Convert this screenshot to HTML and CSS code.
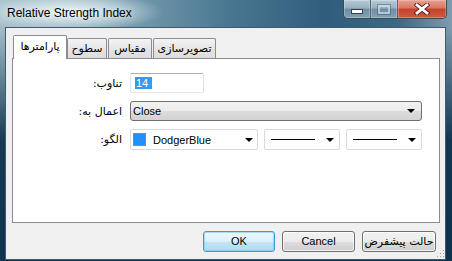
FILE: index.html
```html
<!DOCTYPE html>
<html lang="fa">
<head>
<meta charset="utf-8">
<title>Relative Strength Index</title>
<link rel="stylesheet" href="styles.css">
</head>
<body>
<div class="window">
  <div class="titlebar">
    <span class="title">Relative Strength Index</span>
    <div class="caps">
      <div class="cap min"><span class="min-glyph"></span></div>
      <div class="cap max"><span class="max-glyph"></span></div>
      <div class="cap close">
        <svg width="16" height="12" viewBox="0 0 16 12">
          <path d="M3 2 L13 10 M13 2 L3 10" stroke="#5a2018" stroke-width="4.6" stroke-linecap="square" fill="none"/>
          <path d="M3 2 L13 10 M13 2 L3 10" stroke="#ffffff" stroke-width="2.8" stroke-linecap="square" fill="none"/>
        </svg>
      </div>
    </div>
  </div>
  <div class="client">
    <div class="tabs">
      <div class="tab active" dir="rtl">پارامترها</div>
      <div class="tab t2" dir="rtl">سطوح</div>
      <div class="tab t3" dir="rtl">مقیاس</div>
      <div class="tab t4" dir="rtl">تصویرسازی</div>
    </div>
    <div class="panel">
      <div class="form">
        <div class="label" dir="rtl">تناوب:</div>
        <div class="ctrl"><div class="textbox"><span class="sel">14</span></div></div>
        <div class="label" dir="rtl">اعمال به:</div>
        <div class="ctrl"><div class="dropdown"><span class="dd-text">Close</span><i class="arrow"></i></div></div>
        <div class="label" dir="rtl">الگو:</div>
        <div class="ctrl combos">
          <div class="combo c1"><span class="swatch"></span><span class="c-text">DodgerBlue</span><i class="arrow"></i></div>
          <div class="combo c2"><span class="line"></span><i class="arrow"></i></div>
          <div class="combo c3"><span class="line"></span><i class="arrow"></i></div>
        </div>
      </div>
    </div>
    <div class="buttons">
      <div class="btn default b-ok">OK</div>
      <div class="btn b-cancel">Cancel</div>
      <div class="btn b-reset" dir="rtl">حالت پیشفرض</div>
    </div>
  </div>
  <svg class="grip" width="8" height="8" viewBox="0 0 8 8">
    <rect x="6" y="0" width="1" height="1" fill="#a0a0a0"/>
    <rect x="3" y="3" width="1" height="1" fill="#a0a0a0"/>
    <rect x="6" y="3" width="1" height="1" fill="#a0a0a0"/>
    <rect x="0" y="6" width="1" height="1" fill="#a0a0a0"/>
    <rect x="3" y="6" width="1" height="1" fill="#a0a0a0"/>
    <rect x="6" y="6" width="1" height="1" fill="#a0a0a0"/>
  </svg>
</div>
</body>
</html>
```
FILE: styles.css
```css
html, body {
  margin: 0;
  padding: 0;
  background: #0d3a58;
}

.window {
  position: relative;
  width: 452px;
  height: 261px;
  box-sizing: border-box;
  padding: 0 6px 1px 5px;
  display: flex;
  flex-direction: column;
  overflow: hidden;
  font-family: "Liberation Sans", "DejaVu Sans", sans-serif;
  font-size: 11px;
  color: #000;
  background:
    radial-gradient(ellipse 95px 20px at 68px 12px, rgba(242,248,250,0.95) 0%, rgba(220,234,240,0.6) 55%, rgba(220,234,240,0) 100%),
    linear-gradient(to bottom, rgba(6,40,66,0) 0px, rgba(6,40,66,0) 28px, rgba(6,44,72,0.9) 140px, rgba(6,44,72,0.95) 261px),
    linear-gradient(90deg, #a4bec9 0%, #84a6b6 22%, #4a7892 50%, #2f5d7b 72%, #3c6883 88%, #7f9cae 100%);
}

/* ---------- title bar ---------- */
.titlebar {
  height: 27px;
  flex-shrink: 0;
  display: flex;
  align-items: flex-start;
}

.title {
  padding-left: 2px;
  line-height: 26px;
  font-size: 12px;
  color: #000;
  text-shadow: 0 0 6px rgba(255,255,255,0.9);
}

.caps {
  margin-left: auto;
  margin-right: -1px;
  display: flex;
  height: 19px;
  box-sizing: border-box;
  border: 1px solid #3a4c59;
  border-top: none;
  border-radius: 0 0 5px 5px;
  overflow: hidden;
}

.cap {
  height: 100%;
  display: flex;
  align-items: center;
  justify-content: center;
  box-sizing: border-box;
}

.min, .max {
  width: 27px;
  border-right: 1px solid #4c6575;
  background: linear-gradient(#b9cbd5 0%, #97b0bf 45%, #6f8fa4 50%, #80a0b3 100%);
  box-shadow: inset 0 0 0 1px rgba(255,255,255,0.25);
}

.close {
  width: 48px;
  background: linear-gradient(#e3a394 0%, #d7765f 45%, #c4432b 50%, #cc5a3e 100%);
  box-shadow: inset 0 0 0 1px rgba(255,210,200,0.35);
}

.min-glyph {
  width: 10px;
  height: 3px;
  margin-top: 5px;
  background: #ffffff;
  border: 1px solid #2f4250;
}

.max-glyph {
  width: 8px;
  height: 5px;
  border: 2px solid rgba(230,240,245,0.55);
  outline: 1px solid rgba(60,85,100,0.45);
}

/* ---------- client ---------- */
.client {
  flex: 1;
  display: flex;
  flex-direction: column;
  background: #f0f0f0;
  border: 1px solid #3f5a6c;
}

.tabs {
  height: 30px;
  flex-shrink: 0;
  display: flex;
  align-items: flex-end;
  padding-left: 7px;
  position: relative;
  z-index: 1;
}

.tab {
  height: 20px;
  box-sizing: border-box;
  border: 1px solid #898c95;
  border-bottom: none;
  border-radius: 2px 2px 0 0;
  background: linear-gradient(#f3f3f3 0%, #e6e6e6 50%, #dcdcdc 100%);
  font-family: "DejaVu Sans", sans-serif;
  font-size: 11px;
  line-height: 19px;
  text-align: center;
  white-space: nowrap;
}

.tab.active {
  width: 54px;
  height: 24px;
  margin-bottom: -1px;
  background: #ffffff;
  line-height: 22px;
}

.t2 { width: 40px; }
.t3 { width: 44px; margin-left: 1px; }
.t4 { width: 63px; margin-left: 1px; }

.panel {
  margin-left: 6px;
  width: 428px;
  height: 165px;
  flex-shrink: 0;
  box-sizing: border-box;
  border: 1px solid #898c95;
  background: #ffffff;
}

.form {
  display: grid;
  grid-template-columns: 109px 292px;
  grid-template-rows: 20px 20px 21px;
  column-gap: 8px;
  row-gap: 8px;
  padding-top: 14px;
}

.label {
  align-self: center;
  text-align: right;
  font-family: "DejaVu Sans", sans-serif;
  font-size: 11px;
  white-space: nowrap;
}

.textbox {
  width: 74px;
  height: 20px;
  box-sizing: border-box;
  border: 1px solid;
  border-color: #abadb3 #dbdfe6 #e3e9ef #e2e3ea;
  border-radius: 2px;
  padding: 3px 0 0 4px;
  background: #fff;
}

.sel {
  display: inline-block;
  background: #3399ff;
  color: #fff;
  line-height: 12px;
  padding: 0 4px 0 1px;
}

.dropdown {
  width: 292px;
  height: 20px;
  box-sizing: border-box;
  border: 1px solid #707070;
  border-radius: 3px;
  background: linear-gradient(#f2f2f2 0%, #ebebeb 50%, #dddddd 51%, #d2d2d2 100%);
  display: flex;
  align-items: center;
  padding: 0 6px 0 2px;
}

.dd-text { flex: 1; }

.arrow {
  width: 0;
  height: 0;
  border-left: 4px solid transparent;
  border-right: 4px solid transparent;
  border-top: 4px solid #000;
}

.combos {
  display: flex;
  gap: 6px;
}

.combo {
  height: 21px;
  box-sizing: border-box;
  border: 1px solid #d6dae1;
  border-radius: 2px;
  background: #fff;
  display: flex;
  align-items: center;
}

.c1 { width: 128px; padding: 0 4px 0 2px; }
.c2, .c3 { width: 76px; padding: 0 5px 0 6px; }

.swatch {
  width: 13px;
  height: 13px;
  box-sizing: border-box;
  background: #1e90ff;
  border: 1px solid #7a8a98;
}

.c-text {
  flex: 1;
  margin-left: 7px;
}

.line {
  width: 44px;
  height: 1px;
  background: #000;
  margin-right: auto;
}

/* ---------- buttons ---------- */
.buttons {
  margin-top: 8px;
  display: flex;
  justify-content: flex-end;
  gap: 7px;
  padding-right: 9px;
}

.btn {
  height: 21px;
  box-sizing: border-box;
  border: 1px solid #707070;
  border-radius: 3px;
  background: linear-gradient(#f2f2f2 0%, #ebebeb 50%, #dddddd 51%, #cfcfcf 100%);
  box-shadow: inset 0 0 0 1px rgba(255,255,255,0.7);
  text-align: center;
  line-height: 19px;
  white-space: nowrap;
}

.btn.default {
  border-color: #3c9ad8;
  background: linear-gradient(#ecf7fd 0%, #dcf0fb 50%, #c3e5f7 51%, #b0daf1 100%);
  box-shadow: inset 0 0 0 1px rgba(120,200,240,0.6);
}

.b-ok { width: 72px; }
.b-cancel { width: 73px; }
.b-reset {
  width: 74px;
  font-family: "DejaVu Sans", sans-serif;
  font-size: 11px;
  overflow: visible;
}

.grip {
  position: absolute;
  right: 7px;
  bottom: 3px;
}
```
